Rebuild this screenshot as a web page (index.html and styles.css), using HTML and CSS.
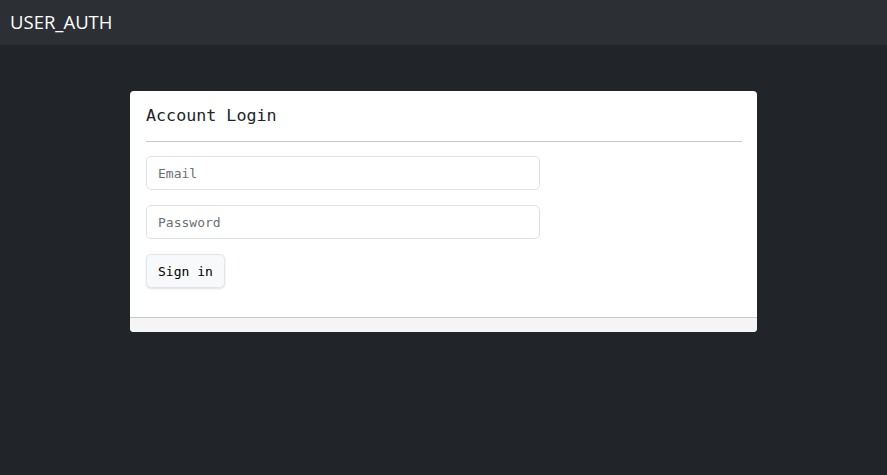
FILE: index.html
```html
<!DOCTYPE html>
<html lang="en">
<head>
<meta charset="utf-8">
<title>USER_AUTH</title>
<link rel="stylesheet" href="styles.css">
</head>
<body>
<nav class="navbar"><span class="brand">USER_AUTH</span></nav>
<main class="main">
  <section class="card">
    <div class="card-body">
      <h1 class="card-title">Account Login</h1>
      <hr class="divider">
      <form class="form">
        <input class="field" type="email" placeholder="Email">
        <input class="field" type="password" placeholder="Password">
        <div><button class="btn" type="button">Sign in</button></div>
      </form>
    </div>
    <div class="card-footer"></div>
  </section>
</main>
</body>
</html>
```
FILE: styles.css
```css
html, body {
  margin: 0;
  padding: 0;
  height: 100%;
}
body {
  background: #212429;
  font-family: "DejaVu Sans Mono", monospace;
}
.navbar {
  height: 45px;
  background: #2c3034;
  display: flex;
  align-items: center;
  padding: 0 10px;
  box-sizing: border-box;
}
.brand {
  color: #ffffff;
  font-family: "Open Sans", "Noto Sans", sans-serif;
  font-size: 18.5px;
  position: relative;
  top: -1px;
}
.main {
  display: flex;
  justify-content: center;
  padding-top: 46px;
}
.card {
  width: 627px;
  background: #ffffff;
  border-radius: 4px;
  overflow: hidden;
}
.card-body {
  padding: 12px 15px 29px 16px;
}
.card-title {
  margin: 0;
  font-size: 16.7px;
  font-weight: normal;
  line-height: 24px;
  color: #212529;
}
.divider {
  margin: 14px 0 14px;
  border: 0;
  border-top: 1px solid #c8c8c8;
}
.form {
  display: flex;
  flex-direction: column;
  gap: 15px;
}
.field {
  width: 394px;
  height: 34px;
  box-sizing: border-box;
  border: 1px solid #dee2e6;
  border-radius: 5px;
  padding: 0 11px;
  font-family: "DejaVu Sans Mono", monospace;
  font-size: 13px;
  color: #212529;
  background: #fff;
}
.field::placeholder {
  color: #6c6f73;
}
.btn {
  height: 34px;
  padding: 0 11px;
  border: 1px solid #e3e5e8;
  border-radius: 5px;
  background: #f8f9fa;
  box-shadow: 0 1px 2px rgba(0,0,0,0.12);
  font-family: "DejaVu Sans Mono", monospace;
  font-size: 13px;
  color: #000;
}
.card-footer {
  height: 14px;
  background: #f5f5f5;
  border-top: 1px solid #c8c8c8;
}
```
